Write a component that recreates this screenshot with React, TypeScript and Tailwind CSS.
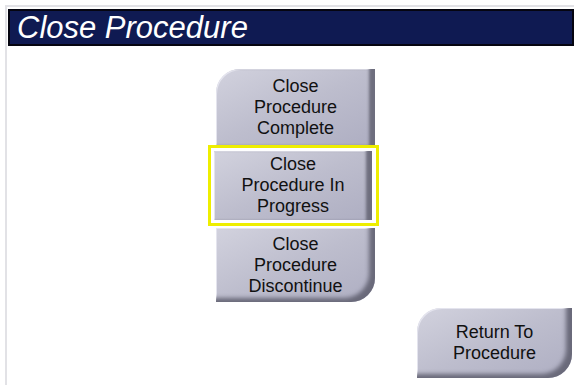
const font = { fontFamily: '"Liberation Sans", Arial, sans-serif' };

type Corner = 'top' | 'bottom' | 'both';

const ProcButton = ({
  lines,
  corner,
  className = '',
}: {
  lines: string[];
  corner: Corner;
  className?: string;
}) => {
  const radius =
    corner === 'top'
      ? 'rounded-tl-[24px]'
      : corner === 'bottom'
        ? 'rounded-br-[24px]'
        : 'rounded-tl-[24px] rounded-br-[24px]';
  const shade =
    corner === 'top'
      ? 'shadow-[inset_-7px_0_3px_-1px_#6e6e7e,inset_1px_1px_0_#e4e4ee]'
      : 'shadow-[inset_-7px_-5px_4px_-1px_#6a6a7a,inset_1px_1px_0_#e4e4ee]';
  return (
    <div
      className={`flex flex-col items-center justify-center bg-gradient-to-br from-[#d2d2de] via-[#bdbdcd] to-[#aeaec2] text-[18px] leading-[21px] text-[#111] ${radius} ${shade} ${className}`}
    >
      {lines.map(line => (
        <span key={line}>{line}</span>
      ))}
    </div>
  );
};

export default function App() {
  return (
    <div className="h-[385px] w-[574px] overflow-hidden bg-white pl-[5px] pt-[5px]" style={font}>
      <div className="h-full border-l-2 border-t-2 border-[#e2e2e6] pl-[1px] pt-[2px]">
        <div className="flex h-[37px] items-center border-2 border-[#050510] bg-[#0f1a52] pl-[7px]">
          <h1 className="text-[31px] italic leading-none text-white">Close Procedure</h1>
        </div>

        <div className="ml-[200px] mt-[23px] flex w-[171px] flex-col">
          <ProcButton
            lines={['Close', 'Procedure', 'Complete']}
            corner="top"
            className="ml-[8px] h-[76px] w-[159px]"
          />
          <div className="h-[81px] border-[3px] border-[#eeee00] p-[3px]">
            <ProcButton
              lines={['Close', 'Procedure In', 'Progress']}
              corner="top"
              className="h-full w-[158px] !rounded-none"
            />
          </div>
          <ProcButton
            lines={['Close', 'Procedure', 'Discontinue']}
            corner="bottom"
            className="ml-[8px] mt-[2px] h-[74px] w-[159px]"
          />
        </div>

        <div className="ml-[409px] mt-[6px]">
          <ProcButton lines={['Return To', 'Procedure']} corner="both" className="h-[70px] w-[155px]" />
        </div>
      </div>
    </div>
  );
}
